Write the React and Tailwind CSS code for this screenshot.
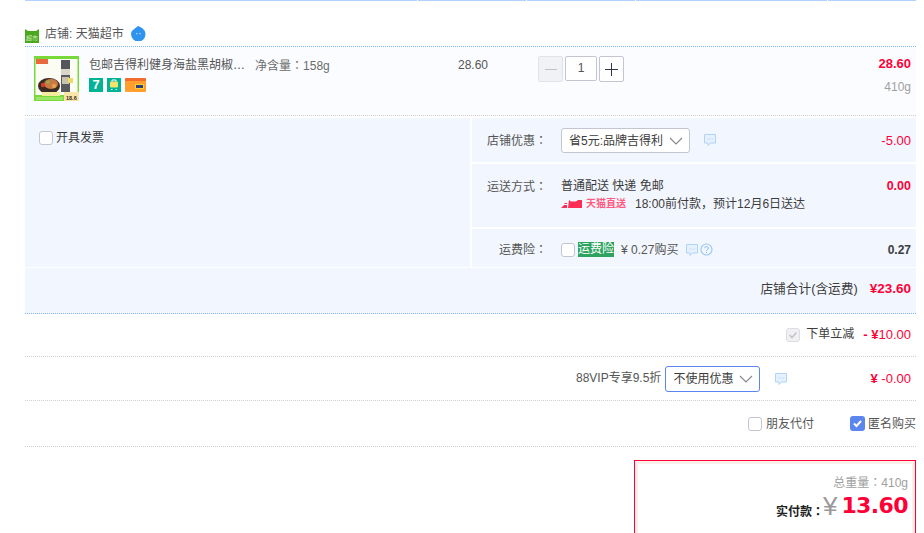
const font = { fontFamily: '"Liberation Sans","Noto Sans CJK SC",sans-serif' }

function Colon() {
  return <span className="font-['Noto_Sans_CJK_TC']">：</span>
}

function ChatIcon({ className = '' }) {
  return (
    <svg width="14" height="14" viewBox="0 0 14 14" fill="none" className={className}>
      <path d="M1.500 1.500h11v8.500H7.500L5 12.500V10H1.500z" fill="#e6f1fd" stroke="#aed4f8" strokeWidth="1" />
      <path d="M4.500 6h1M6.600 6h1M8.700 6h1" stroke="#aed4f8" strokeWidth="1" />
    </svg>
  )
}

function Check({ checked, disabled }) {
  if (checked) {
    return (
      <span className="w-[15px] h-[15px] rounded-[3px] bg-[#5b86f0] flex items-center justify-center shrink-0">
        <svg width="11" height="11" viewBox="0 0 11 11" fill="none">
          <path d="M2 5.500l2.500 2.500L9 3" stroke="#fff" strokeWidth="2" />
        </svg>
      </span>
    )
  }
  if (disabled) {
    return (
      <span className="w-[14px] h-[14px] rounded-[3px] bg-[#f1f1f3] border border-[#dcdde3] flex items-center justify-center shrink-0">
        <svg width="10" height="10" viewBox="0 0 10 10" fill="none">
          <path d="M1.500 5l2.500 2.500L8.500 2.500" stroke="#c3c4c9" strokeWidth="1.600" />
        </svg>
      </span>
    )
  }
  return <span className="w-[14px] h-[14px] rounded-[3px] bg-white border border-[#c3c5d3] shrink-0" />
}

function Chevron() {
  return (
    <svg width="14" height="8" viewBox="0 0 14 8" fill="none">
      <path d="M1 1l6 6 6-6" stroke="#85868c" strokeWidth="1.100" />
    </svg>
  )
}

function ProductThumb() {
  return (
    <svg width="45" height="45" viewBox="0 0 45 45" className="shrink-0">
      <rect width="45" height="45" fill="#7ad93a" />
      <rect x="1.500" y="3" width="42" height="36" fill="#fbfdf4" />
      <rect x="2" y="3" width="12" height="5" fill="#e8683f" />
      <rect x="27" y="4" width="9" height="9" fill="#55565c" />
      <rect x="27" y="13" width="9" height="6" fill="#d9d5c8" />
      <rect x="27" y="19" width="9" height="17" fill="#5a5a5e" />
      <rect x="28" y="21" width="7" height="7" fill="#c9c3ae" />
      <rect x="34" y="22" width="5" height="5" fill="#ecd96a" />
      <ellipse cx="15" cy="30" rx="11" ry="8" fill="#3c2a23" />
      <ellipse cx="17" cy="28" rx="7" ry="5" fill="#c77a45" />
      <circle cx="9" cy="29" r="2.200" fill="#d63d2a" />
      <circle cx="20" cy="30" r="2.200" fill="#e2a24a" />
      <circle cx="14" cy="26" r="1.800" fill="#8fb04a" />
      <rect x="8" y="36" width="18" height="4" fill="#f3eb9d" />
      <rect x="30" y="36" width="15" height="9" fill="#f7e6a8" />
      <rect x="2" y="41" width="27" height="3" fill="#9be566" />
      <text x="32" y="44" fontSize="5.500" fontWeight="700" fill="#3a2a1a" style={font}>18.6</text>
    </svg>
  )
}

export default function App() {
  return (
    <div className="w-[924px] h-[533px] overflow-hidden bg-white text-[12px] text-[#3c3c3c]" style={font}>
      <div className="ml-[25px] w-[891px]">
        {/* table head rule */}
        <div className="flex gap-[1px] h-[1px]">
          <div className="w-[392px] bg-[#b2d1ff]" />
          <div className="w-[108px] bg-[#b2d1ff]" />
          <div className="w-[108px] bg-[#b2d1ff]" />
          <div className="w-[191px] bg-[#b2d1ff]" />
          <div className="flex-1 bg-[#b2d1ff]" />
        </div>

        {/* shop */}
        <div className="h-[46px] pt-[25px] flex items-start border-b border-dotted border-[#80b2ff]">
          <svg width="14" height="15" viewBox="0 0 14 15" className="mt-[2px]">
            <path d="M0 1l3 2h8l3-2v14H0z" fill="#4aa81e" />
            <text x="1" y="12" fontSize="6" fill="#cfeeb8" style={font}>超市</text>
          </svg>
          <span className="ml-[6px] leading-[16px] text-[#555]">店铺: 天猫超市</span>
          <svg width="16" height="16" viewBox="0 0 15 15" className="ml-[6px] -mt-[1px]">
            <path d="M7.500 1C10 2 14.500 4 14.500 8.500A6.500 6.500 0 0 1 1 9C.6 5 4.500 4 7.500 1z" fill="#2e94f0" />
            <path d="M6 8h.8M9 8h.8" stroke="#fff" strokeWidth="1.200" />
          </svg>
        </div>

        {/* item */}
        <div className="h-[69px] bg-[#fbfcff] border-b border-dotted border-[#cfcfcf] flex items-start">
          <div className="ml-[9px] mt-[9px]">
            <ProductThumb />
          </div>
          <div className="ml-[10px] mt-[10px] w-[166px]">
            <div className="leading-[16px] text-[#555]">包邮吉得利健身海盐黑胡椒…</div>
            <div className="flex items-center gap-[4px] mt-[5px]">
              <span className="w-[14px] h-[14px] bg-[#00b395] text-white text-[13px] font-bold leading-[14px] text-center">7</span>
              <span className="w-[14px] h-[14px] bg-[#00b395] flex items-center justify-center">
                <svg width="12" height="12" viewBox="0 0 12 12">
                  <rect x="2" y="2.500" width="8" height="6" rx="1" fill="#f3e36a" />
                  <path d="M4 2.500V1h4v1.500M3 10.500h1.500M7.500 10.500H9" stroke="#fff" fill="none" />
                </svg>
              </span>
              <span className="w-[21px] h-[14px] rounded-[1px] bg-[#ff9f2e] border-t-[3px] border-[#f26a2e] flex items-center justify-end pr-[2px]">
                <span className="w-[9px] h-[5px] bg-[#2b3f7a] border border-[#f6d23c]" />
              </span>
            </div>
          </div>
          <div className="w-[203px] mt-[10px] leading-[16px] text-[#6c6c6c]">净含量<Colon />158g</div>
          <div className="w-[80px] mt-[10px] leading-[16px] text-[#555]">28.60</div>
          <div className="flex mt-[9px] gap-[2px]">
            <div className="w-[25px] h-[26px] rounded-[2px] bg-[#f1f2f5] border border-[#e2e3e8] flex items-center justify-center">
              <span className="w-[12px] h-[1px] bg-[#bfc0c5]" />
            </div>
            <div className="w-[32px] h-[25px] bg-white border border-[#c3c5d3] rounded-[2px] text-center leading-[23px] text-[#555]">1</div>
            <div className="w-[25px] h-[26px] rounded-[2px] bg-white border border-[#c3c5d3] flex items-center justify-center">
              <svg width="13" height="13" viewBox="0 0 13 13">
                <path d="M0 6.500h13M6.500 0v13" stroke="#33364a" strokeWidth="1" />
              </svg>
            </div>
          </div>
          <div className="flex-1 pr-[5px] pt-[9px] text-right">
            <div className="leading-[16px] text-[13px] font-bold text-[#ff0036]">28.60</div>
            <div className="leading-[16px] mt-[7px] text-[#a0a0a0]">410g</div>
          </div>
        </div>

        {/* options */}
        <div className="mt-[2px] h-[149px] bg-[#f2f6fe] flex">
          <div className="w-[447px] border-r-2 border-white pl-[14px] pt-[13px] flex items-start gap-[3px]">
            <Check />
            <span className="leading-[14px] text-[#3c3c3c]">开具发票</span>
          </div>
          <div className="flex-1 flex flex-col">
            <div className="h-[46px] border-b-2 border-white flex items-start pt-[10px]">
              <span className="w-[75px] text-right leading-[24px] text-[#555]">店铺优惠<Colon /></span>
              <div className="ml-[14px] w-[129px] h-[25px] bg-white border border-[#c3c5d3] rounded-[3px] flex items-center justify-between pl-[7px] pr-[6px]">
                <span className="text-[#3c3c3c]">省5元:品牌吉得利</span>
                <Chevron />
              </div>
              <ChatIcon className="ml-[13px] mt-[5px]" />
              <span className="flex-1 pr-[5px] text-right leading-[24px] mt-[1px] text-[13px] text-[#ff0036]">-5.00</span>
            </div>
            <div className="h-[65px] border-b-2 border-white flex items-start pt-[14px]">
              <span className="w-[75px] text-right leading-[16px] text-[#555]">运送方式<Colon /></span>
              <div className="ml-[14px]">
                <div className="leading-[16px] text-[#3c3c3c]">普通配送 快递 免邮</div>
                <div className="flex items-center leading-[18px] mt-[1px]">
                  <svg width="22" height="10" viewBox="0 0 22 10">
                    <path d="M0 9l3-3h3v3zM4 4h2v1H3zM8 1l2 1.500h5L17 1h4v8H7z" fill="#ff2d55" />
                  </svg>
                  <span className="ml-[3px] w-[49px] text-[10px] font-bold text-[#ff5c7f]">天猫直送</span>
                  <span className="text-[#3c3c3c]">18:00前付款，预计12月6日送达</span>
                </div>
              </div>
              <span className="flex-1 pr-[5px] text-right leading-[16px] text-[12.500px] font-bold text-[#ff0036]">0.00</span>
            </div>
            <div className="flex-1 flex items-center pt-[3px]">
              <span className="w-[75px] text-right text-[#555]">运费险<Colon /></span>
              <div className="ml-[14px] flex items-center">
                <Check />
                <span className="ml-[3px] bg-[#2da35f] text-white leading-[15px]">运费险</span>
                <span className="ml-[7px] text-[#555]">¥ 0.27购买</span>
                <ChatIcon className="ml-[7px]" />
                <svg width="13" height="13" viewBox="0 0 13 13" fill="none" className="ml-[1px]">
                  <circle cx="6.500" cy="6.500" r="5.500" stroke="#9cc8f5" strokeWidth="1.200" />
                  <path d="M4.800 5.200c0-2.200 3.500-2.200 3.500 0 0 1.300-1.800 1.300-1.800 2.600M6.500 9v1" stroke="#7fb6f0" strokeWidth="1" />
                </svg>
              </div>
              <span className="flex-1 pr-[5px] text-right font-bold text-[#3c3c3c]">0.27</span>
            </div>
          </div>
        </div>

        {/* shop total */}
        <div className="mt-[1px] h-[46px] bg-[#f2f6fe] border-b border-dotted border-[#80b2ff] flex items-center justify-end pr-[5px] pb-[2px]">
          <span className="text-[12.700px] text-[#3c3c3c]">店铺合计(含运费)</span>
          <span className="ml-[12px] font-bold text-[13.500px] text-[#ff0036]">¥23.60</span>
        </div>

        {/* discount rows */}
        <div className="h-[43px] border-b border-dotted border-[#d0d0d0] flex items-center justify-end pr-[5px]">
          <Check disabled />
          <span className="ml-[6px] -mt-[3px] text-[#3c3c3c]">下单立减</span>
          <span className="ml-[9px] text-[13px] text-[#ff0036]"><b>- ¥</b>10.00</span>
        </div>
        <div className="h-[44px] border-b border-dotted border-[#d0d0d0] flex items-center">
          <span className="ml-[551px] -mt-[1px] text-[#555]">88VIP专享9.5折</span>
          <div className="ml-[4px] w-[95px] h-[26px] bg-white border border-[#5b86f0] rounded-[3px] flex items-center justify-between pl-[7px] pr-[6px]">
            <span className="text-[#3c3c3c]">不使用优惠</span>
            <Chevron />
          </div>
          <ChatIcon className="ml-[14px]" />
          <span className="flex-1 pr-[5px] text-right text-[13px] text-[#ff0036]"><b>¥</b> -0.00</span>
        </div>
        <div className="h-[46px] border-b border-dotted border-[#d0d0d0] flex items-center justify-end">
          <Check />
          <span className="ml-[4px] text-[#555]">朋友代付</span>
          <span className="ml-[36px]"><Check checked /></span>
          <span className="ml-[3px] text-[#555]">匿名购买</span>
        </div>

        {/* pay box */}
        <div className="mt-[13px] ml-auto w-[282px] h-[90px] border border-[#ff0036]">
          <div className="h-full border-[3px] border-[#fbf0e9] border-b-0 text-right pr-[4px] pt-[10px]">
            <div className="leading-[16px] text-[#a0a0a0]">总重量<Colon />410g</div>
            <div className="flex items-end justify-end mt-[1px]">
              <span className="font-bold text-[#222] leading-[16px]">实付款<Colon /></span>
              <span className="text-[26px] leading-[28px] text-[#999] -ml-[1px]">¥</span>
              <span className="ml-[4px] text-[22px] leading-[28px] tracking-[-0.6px] font-bold text-[#ff0036] font-['DejaVu_Sans']">13.60</span>
            </div>
          </div>
        </div>
      </div>
    </div>
  )
}
